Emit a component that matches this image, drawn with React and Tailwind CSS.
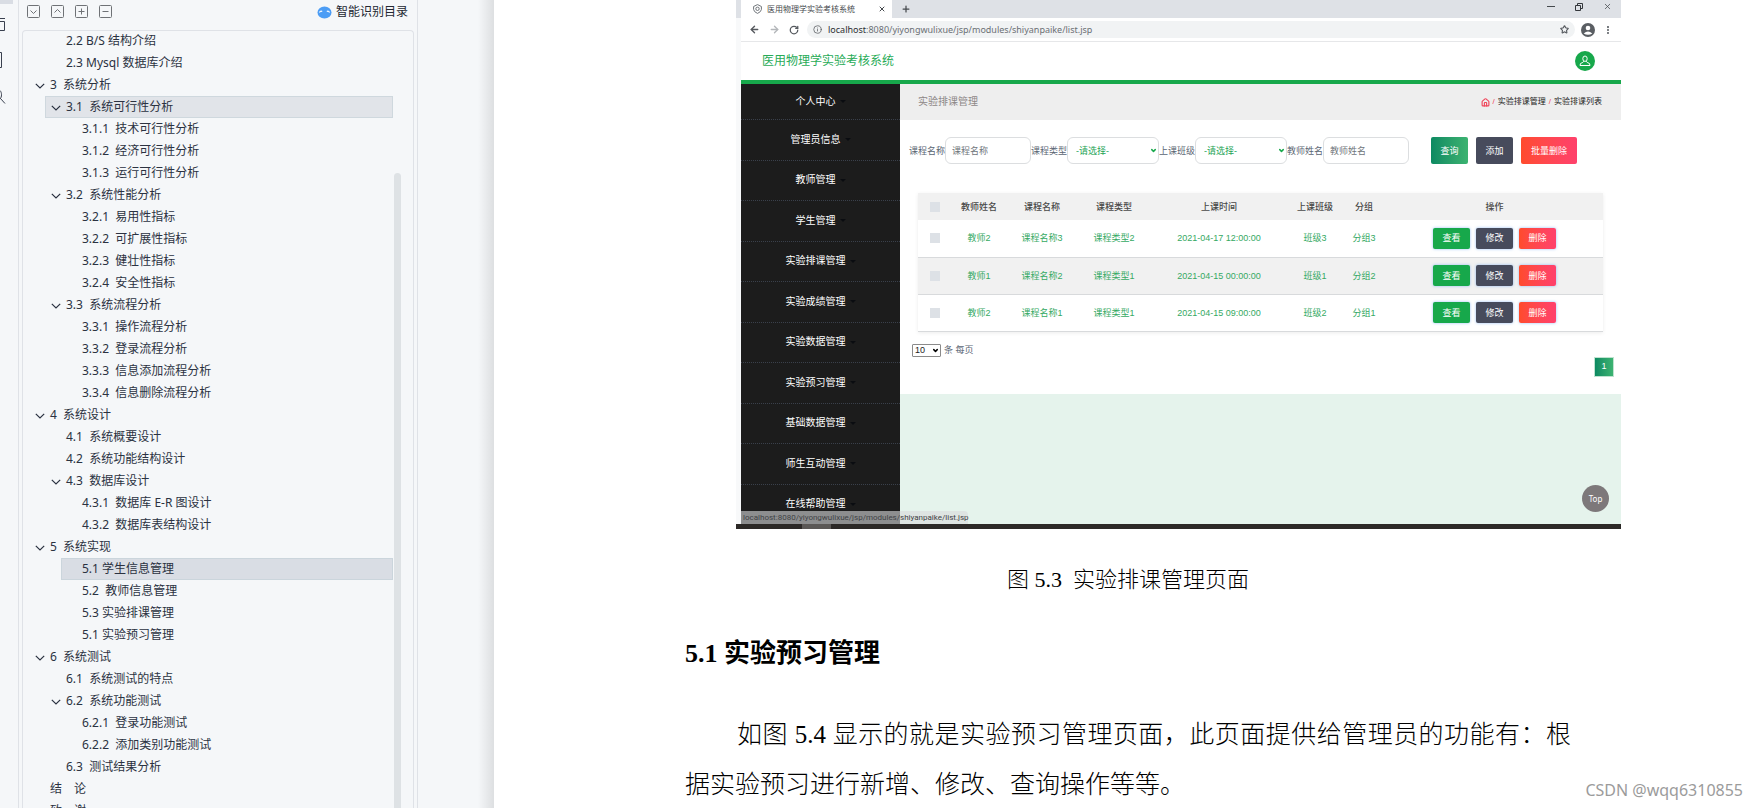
import React, { useState } from 'react';
import { ArrowLeft, ArrowRight, ChevronDown, Home, Info, MoreVertical, Plus, RotateCw, Star, X } from 'lucide-react';

const outline = [
    { level: 2, text: '2.2 B/S 结构介绍' },
    { level: 2, text: '2.3 Mysql 数据库介绍' },
    { level: 1, text: '3  系统分析', open: true },
    { level: 2, text: '3.1  系统可行性分析', open: true, mark: 'hover' },
    { level: 3, text: '3.1.1  技术可行性分析' },
    { level: 3, text: '3.1.2  经济可行性分析' },
    { level: 3, text: '3.1.3  运行可行性分析' },
    { level: 2, text: '3.2  系统性能分析', open: true },
    { level: 3, text: '3.2.1  易用性指标' },
    { level: 3, text: '3.2.2  可扩展性指标' },
    { level: 3, text: '3.2.3  健壮性指标' },
    { level: 3, text: '3.2.4  安全性指标' },
    { level: 2, text: '3.3  系统流程分析', open: true },
    { level: 3, text: '3.3.1  操作流程分析' },
    { level: 3, text: '3.3.2  登录流程分析' },
    { level: 3, text: '3.3.3  信息添加流程分析' },
    { level: 3, text: '3.3.4  信息删除流程分析' },
    { level: 1, text: '4  系统设计', open: true },
    { level: 2, text: '4.1  系统概要设计' },
    { level: 2, text: '4.2  系统功能结构设计' },
    { level: 2, text: '4.3  数据库设计', open: true },
    { level: 3, text: '4.3.1  数据库 E-R 图设计' },
    { level: 3, text: '4.3.2  数据库表结构设计' },
    { level: 1, text: '5  系统实现', open: true },
    { level: 3, text: '5.1 学生信息管理', mark: 'current' },
    { level: 3, text: '5.2  教师信息管理' },
    { level: 3, text: '5.3 实验排课管理' },
    { level: 3, text: '5.1 实验预习管理' },
    { level: 1, text: '6  系统测试', open: true },
    { level: 2, text: '6.1  系统测试的特点' },
    { level: 2, text: '6.2  系统功能测试', open: true },
    { level: 3, text: '6.2.1  登录功能测试' },
    { level: 3, text: '6.2.2  添加类别功能测试' },
    { level: 2, text: '6.3  测试结果分析' },
    { level: 1, text: '结　论' },
    { level: 1, text: '致　谢' },
];

const indents = { 1: 'ml-[6px]', 2: 'ml-[22px]', 3: 'ml-[38px]' };

const marks = {
    hover: 'bg-[#e1e4e9] border-[#cfd8de]',
    current: 'bg-[#d9dde4] border-[#cbd5dc]',
};

const menu = [
    '个人中心',
    '管理员信息',
    '教师管理',
    '学生管理',
    '实验排课管理',
    '实验成绩管理',
    '实验数据管理',
    '实验预习管理',
    '基础数据管理',
    '师生互动管理',
    '在线帮助管理',
];

const rows = [
    { teacher: '教师2', course: '课程名称3', type: '课程类型2', time: '2021-04-17 12:00:00', cls: '班级3', group: '分组3' },
    { teacher: '教师1', course: '课程名称2', type: '课程类型1', time: '2021-04-15 00:00:00', cls: '班级1', group: '分组2' },
    { teacher: '教师2', course: '课程名称1', type: '课程类型1', time: '2021-04-15 09:00:00', cls: '班级2', group: '分组1' },
];

const ToolButton = ({ label, d }) => (
    <button aria-label={label} className="w-[13px] h-[13px]">
        <svg viewBox="0 0 13 13" className="w-full h-full" fill="none" stroke="#6f7276">
            <rect x="0.5" y="0.5" width="12" height="12" rx="1" />
            <path d={d} />
        </svg>
    </button>
);

const Rail = () => (
    <div className="w-[18px] shrink-0 flex flex-col items-start">
        <div className="w-[13px] h-1 bg-[#d9dde4]" />
        <svg className="w-[6px] h-[14px] mt-[14px]" viewBox="0 0 6 14" fill="none" stroke="#39404f">
            <path d="M0 0.5H5M0 3.5H4.5V12.5H0" />
        </svg>
        <svg className="w-[6px] h-[16px] mt-5" viewBox="0 0 6 16" fill="none" stroke="#39404f">
            <path d="M0 0.5H1.5V15.5H0" />
        </svg>
        <svg className="w-[6px] h-[16px] mt-[22px]" viewBox="0 0 6 16" fill="none" stroke="#39404f">
            <path d="M0 0.5C2 2.5 2 7 0 9M0.5 8.5L5 13.5" />
        </svg>
    </div>
);

const OutlinePanel = () => (
    <aside className="w-[400px] shrink-0 flex flex-col border-x border-[#dfe2e7] px-[3px]">
        <div className="h-[30px] shrink-0 flex items-start justify-between pl-[5px] pr-[6px]">
            <div className="flex gap-[11px] mt-[5px]">
                <ToolButton label="展开" d="M3.5 5.5L6.5 8.5L9.5 5.5" />
                <ToolButton label="收起" d="M3.5 7.5L6.5 4.5L9.5 7.5" />
                <ToolButton label="全部展开" d="M6.5 3.5V9.5M3.5 6.5H9.5" />
                <ToolButton label="全部收起" d="M3.5 6.5H9.5" />
            </div>
            <button className="flex items-center gap-1 mt-[3px] text-[12px] leading-[18px] text-[#232832]">
                <svg className="w-[15px] h-[13px]" viewBox="0 0 15 13">
                    <ellipse cx="7.5" cy="6.5" rx="7" ry="6" fill="#4c9df5" />
                    <path d="M2.5 6.5Q3.5 4.5 5.2 5.5M9.8 5.5Q11.5 4.5 12.5 6.5" stroke="#fff" strokeWidth="1.2" fill="none" />
                </svg>
                智能识别目录
            </button>
        </div>
        <nav className="flex-1 min-h-0 flex border border-b-0 border-[#dfe2e7] rounded-t-sm overflow-hidden">
            <ul className="flex-1 -mt-px">
                {outline.map((item, i) => (
                    <li key={i} className="h-[22px] flex">
                        <button
                            className={`${indents[item.level]} ${marks[item.mark] || 'border-transparent'} flex-1 flex items-center border text-left text-[12px] leading-[20px] text-[#2b3241] whitespace-pre`}
                        >
                            <span className="w-5 shrink-0 flex justify-center">
                                {item.open && (
                                    <svg className="w-[10px] h-[6px] mt-[2px]" viewBox="0 0 10 6" fill="none" stroke="#2b3241" strokeWidth="1.2">
                                        <path d="M0.8 0.8L5 5L9.2 0.8" />
                                    </svg>
                                )}
                            </span>
                            {item.text}
                        </button>
                    </li>
                ))}
            </ul>
            <div className="w-[20px] shrink-0 pt-[142px] pl-px">
                <div className="w-[7px] h-full rounded-t-full bg-[#dee2e5]" />
            </div>
        </nav>
    </aside>
);

const TabStrip = () => (
    <div className="h-[18px] flex items-center bg-[#dee1e6] pl-[5px] text-[#45494d]">
        <div className="w-[151px] h-full flex items-center bg-white pl-[12px] pr-[6px]">
            <svg className="w-[9px] h-[10px] mr-[5px]" viewBox="0 0 9 10" fill="none" stroke="#70757a">
                <path d="M4.5 0.6L8.4 2.5V5.5Q8 8 4.5 9.4Q1 8 0.6 5.5V2.5Z" />
                <circle cx="4.5" cy="4.8" r="1.7" />
            </svg>
            <span className="flex-1 text-[8px] leading-[16px] whitespace-nowrap">医用物理学实验考核系统</span>
            <button aria-label="关闭标签页"><X className="w-[8px] h-[8px]" strokeWidth={3} /></button>
        </div>
        <button aria-label="新标签页" className="ml-[9px]"><Plus className="w-[10px] h-[10px]" strokeWidth={3} /></button>
        <div className="ml-auto flex items-center gap-[20px] mr-[9px] mb-[5px]">
            <button aria-label="最小化" className="w-[8px] h-px bg-[#45494d]" />
            <button aria-label="还原">
                <svg className="w-[8px] h-[8px]" viewBox="0 0 8 8" fill="none" stroke="#33363a">
                    <path d="M0.5 2.5H5.5V7.5H0.5ZM2.5 2.5V0.5H7.5V5.5H5.5" />
                </svg>
            </button>
            <button aria-label="关闭"><X className="w-[9px] h-[9px]" strokeWidth={2} /></button>
        </div>
    </div>
);

const AddressBar = () => (
    <div className="h-6 flex items-center bg-white border-b border-[#e6e7e9] pl-2 pr-2 text-[#55595e]">
        <button aria-label="后退"><ArrowLeft className="w-[11px] h-[11px]" strokeWidth={3} /></button>
        <button aria-label="前进" className="ml-[9px] text-[#b4b7ba]"><ArrowRight className="w-[11px] h-[11px]" strokeWidth={3} /></button>
        <button aria-label="刷新" className="ml-[9px]"><RotateCw className="w-[10px] h-[10px]" strokeWidth={3} /></button>
        <div className="ml-2 flex-1 h-[17px] flex items-center rounded-full bg-[#f1f3f4] px-[6px]">
            <Info className="w-[9px] h-[9px] mr-[6px]" strokeWidth={2} />
            <span className="flex-1 text-[9px] leading-[16px] text-[#6b7075]">
                <span className="text-[#2b2e31]">localhost</span>:8080/yiyongwulixue/jsp/modules/shiyanpaike/list.jsp
            </span>
            <Star className="w-[9px] h-[9px]" strokeWidth={3} />
        </div>
        <svg className="ml-[6px] w-[14px] h-[14px]" viewBox="0 0 14 14">
            <circle cx="7" cy="7" r="7" fill="#5a5e63" />
            <circle cx="7" cy="5" r="2.3" fill="#fff" />
            <path d="M2.7 10.5Q7 6.5 11.3 10.5Q7 13 2.7 10.5Z" fill="#fff" />
        </svg>
        <MoreVertical className="ml-2 w-[10px] h-[10px]" strokeWidth={3} />
    </div>
);

const FilterInput = ({ id, label }) => (
    <>
        <label htmlFor={id} className="w-9 shrink-0 text-[#5a6573] whitespace-nowrap">{label}</label>
        <input
            id={id}
            placeholder={label}
            className="w-[86px] h-[27px] rounded-md border border-[#dcdee0] bg-white px-[6px] placeholder:text-[#6f757b]"
        />
    </>
);

const FilterSelect = ({ id, label }) => (
    <>
        <label htmlFor={id} className="w-9 shrink-0 text-[#5a6573] whitespace-nowrap">{label}</label>
        <div className="relative w-[92px] h-[27px]">
            <select id={id} className="w-full h-full appearance-none rounded-md border border-[#dcdee0] bg-white px-2 text-[#23a455]">
                <option>-请选择-</option>
            </select>
            <ChevronDown className="absolute right-[2px] top-[10px] w-[7px] h-[7px] text-[#17a84b] pointer-events-none" strokeWidth={5} />
        </div>
    </>
);

const actionBase = 'w-[37px] h-[21px] rounded-[2px] text-white shadow-[0_0_3px_rgba(80,150,240,0.6)]';

const ScheduleTable = () => (
    <table className="w-full table-fixed text-center text-[9px] leading-[14px] shadow-[0_1px_4px_rgba(0,0,0,0.08)]">
        <colgroup>
            <col className="w-[34px]" />
            <col className="w-[54px]" />
            <col className="w-[72px]" />
            <col className="w-[72px]" />
            <col className="w-[138px]" />
            <col className="w-[54px]" />
            <col className="w-[44px]" />
            <col className="w-[217px]" />
        </colgroup>
        <thead>
            <tr className="h-[27px] bg-[#f1f1f1] text-[#4a4a4a]">
                <th><input type="checkbox" aria-label="全选" className="block mx-auto w-[10px] h-[10px] appearance-none bg-[#dde1e6]" /></th>
                <th className="font-medium">教师姓名</th>
                <th className="font-medium">课程名称</th>
                <th className="font-medium">课程类型</th>
                <th className="font-medium">上课时间</th>
                <th className="font-medium">上课班级</th>
                <th className="font-medium">分组</th>
                <th className="font-medium">操作</th>
            </tr>
        </thead>
        <tbody>
            {rows.map((row, i) => (
                <tr key={i} className="h-[37px] border-b border-[#d8dadc] text-[#35a963] even:bg-[#f1f1f1] whitespace-nowrap">
                    <td><input type="checkbox" aria-label={row.course} className="block mx-auto w-[10px] h-[10px] appearance-none bg-[#dde1e6]" /></td>
                    <td>{row.teacher}</td>
                    <td>{row.course}</td>
                    <td>{row.type}</td>
                    <td>{row.time}</td>
                    <td>{row.cls}</td>
                    <td>{row.group}</td>
                    <td>
                        <div className="flex justify-center gap-[6px]">
                            <button className={`${actionBase} bg-[#17a84b]`}>查看</button>
                            <button className={`${actionBase} bg-[#474b5c]`}>修改</button>
                            <button className={`${actionBase} bg-linear-to-r from-[#ff4b2b] to-[#ff416c]`}>删除</button>
                        </div>
                    </td>
                </tr>
            ))}
        </tbody>
    </table>
);

const AdminPage = () => {
    const [pageSize, setPageSize] = useState('10');

    return (
        <div className="bg-white font-['Liberation_Sans','Noto_Sans_CJK_SC',sans-serif]">
            <header className="h-[42px] flex items-center justify-between border-b-4 border-[#17a84b] pl-[21px] pr-[26px]">
                <h1 className="text-[12px] leading-[18px] text-[#28ab57]">医用物理学实验考核系统</h1>
                <button aria-label="用户" className="w-5 h-5 rounded-full bg-[#17a84b] flex items-center justify-center">
                    <svg className="w-3 h-3" viewBox="0 0 12 12" fill="none" stroke="#fff">
                        <ellipse cx="6" cy="3.7" rx="2.2" ry="2.7" />
                        <path d="M4.8 6.2Q4.5 7.5 1.5 8.5L1 10.5H11L10.5 8.5Q7.5 7.5 7.2 6.2" />
                    </svg>
                </button>
            </header>
            <div className="flex">
                <nav className="w-[159px] h-[440px] shrink-0 bg-[#1c1c1c] flex flex-col">
                    {menu.map((item, i) => (
                        <a
                            key={item}
                            href="#"
                            className={`${i === 0 ? 'h-9' : 'flex-1'} ${i < menu.length - 1 ? 'border-b border-dotted border-[#3a404b]' : ''} flex items-center justify-center gap-1 text-[10px] leading-[16px] text-white`}
                        >
                            {item}
                            <span className="border-x-3 border-t-3 border-x-transparent border-t-[#0a0c10]" />
                        </a>
                    ))}
                </nav>
                <main className="flex-1 min-w-0 flex flex-col bg-[#e5f3ec]">
                    <div className="h-9 flex items-center justify-between bg-[#eeeeee] pl-[18px] pr-[19px]">
                        <h2 className="text-[10px] leading-[16px] text-[#8d8787]">实验排课管理</h2>
                        <div className="flex items-center gap-[3px] text-[8px] leading-[12px] text-[#222]">
                            <Home className="w-[9px] h-[9px] text-[#f0455a]" strokeWidth={3} />
                            <span className="text-[#f0455a]">/</span>
                            <a href="#">实验排课管理</a>
                            <span className="text-[#f0455a]">/</span>
                            <span>实验排课列表</span>
                        </div>
                    </div>
                    <div className="h-[274px] bg-white pt-[17px]">
                        <div className="flex items-center pl-[9px] text-[9px] leading-[14px]">
                            <FilterInput id="course" label="课程名称" />
                            <FilterSelect id="type" label="课程类型" />
                            <FilterSelect id="class" label="上课班级" />
                            <FilterInput id="teacher" label="教师姓名" />
                            <div className="ml-[22px] flex gap-2 text-white">
                                <button className="w-[37px] h-[27px] rounded-[2px] bg-linear-to-r from-[#0b8a62] to-[#3cb371]">查询</button>
                                <button className="w-[37px] h-[27px] rounded-[2px] bg-[#474b5c]">添加</button>
                                <button className="w-[56px] h-[27px] rounded-[2px] bg-linear-to-r from-[#ff4b2b] to-[#ff416c]">批量删除</button>
                            </div>
                        </div>
                        <div className="mt-[29px] px-[18px]">
                            <ScheduleTable />
                        </div>
                        <div className="mt-3 flex items-center gap-[3px] pl-3 text-[9px] leading-[13px] text-[#5a6573]">
                            <div className="relative">
                                <select
                                    aria-label="每页条数"
                                    value={pageSize}
                                    onChange={(e) => setPageSize(e.target.value)}
                                    className="block w-[29px] h-[13px] appearance-none border border-[#8a8a8a] rounded-[1px] pl-[2px] leading-[11px] text-[#222]"
                                >
                                    <option>10</option>
                                    <option>25</option>
                                    <option>50</option>
                                </select>
                                <ChevronDown className="absolute right-[2px] top-[3px] w-[7px] h-[7px] text-black pointer-events-none" strokeWidth={5} />
                            </div>
                            条 每页
                        </div>
                        <div className="flex justify-end pr-[7px]">
                            <button className="w-5 h-5 border border-[#bfe3d0] bg-linear-to-r from-[#0b8a62] to-[#3cb371] text-[9px] text-white">1</button>
                        </div>
                    </div>
                </main>
            </div>
        </div>
    );
};

const Figure = () => (
    <div className="pl-[242px] pr-[136px]">
        <div className="relative overflow-hidden">
            <TabStrip />
            <div className="pl-[5px] bg-[#f8f9fa]">
                <AddressBar />
                <AdminPage />
            </div>
            {/* windows taskbar edge */}
            <div className="h-[5px] bg-[#2c2927] pl-[66px]">
                <div className="w-[29px] h-full bg-[#5b5856]" />
            </div>
            <div className="absolute left-[5px] bottom-[5px] w-[227px] h-[13px] rounded-tr-sm bg-[#d8dadc]/60 pl-[2px] font-[Roboto,sans-serif] text-[8px] leading-[13px] text-[#3f4245] whitespace-nowrap">
                localhost:8080/yiyongwulixue/jsp/modules/shiyanpaike/list.jsp
            </div>
            <button className="absolute right-[12px] bottom-[17px] w-[27px] h-[27px] rounded-full bg-[#7d787a] text-[8px] text-white">Top</button>
        </div>
    </div>
);

export default function App() {
    return (
        <div className="relative h-screen flex overflow-hidden bg-[#f5f7f9] font-['Noto_Sans','Noto_Sans_CJK_SC',sans-serif]">
            <Rail />
            <OutlinePanel />
            <div className="w-[76px] shrink-0 flex justify-end">
                <div className="w-4 bg-linear-to-r from-[#f5f7f9] to-[#dddfe1]" />
            </div>
            <article className="flex-1 min-w-0 bg-white text-black">
                <Figure />
                <section className="pl-[191px] pr-[186px] font-['Liberation_Serif','Noto_Sans_CJK_SC',serif]">
                    <p className="mt-[35px] text-center text-[22px] leading-[32px] font-light whitespace-pre">图 5.3  实验排课管理页面</p>
                    <h2 className="mt-[40px] text-[26px] leading-[36px] font-bold">5.1 实验预习管理</h2>
                    <p className="mt-[38px] indent-[52px] text-justify text-[25px] leading-[50px] font-light">
                        如图 5.4 显示的就是实验预习管理页面，此页面提供给管理员的功能有：根据实验预习进行新增、修改、查询操作等等。
                    </p>
                </section>
            </article>
            <div className="absolute right-[14px] bottom-[6px] text-[16px] leading-[24px] text-[#9b9b9b]">CSDN @wqq6310855</div>
        </div>
    );
}
